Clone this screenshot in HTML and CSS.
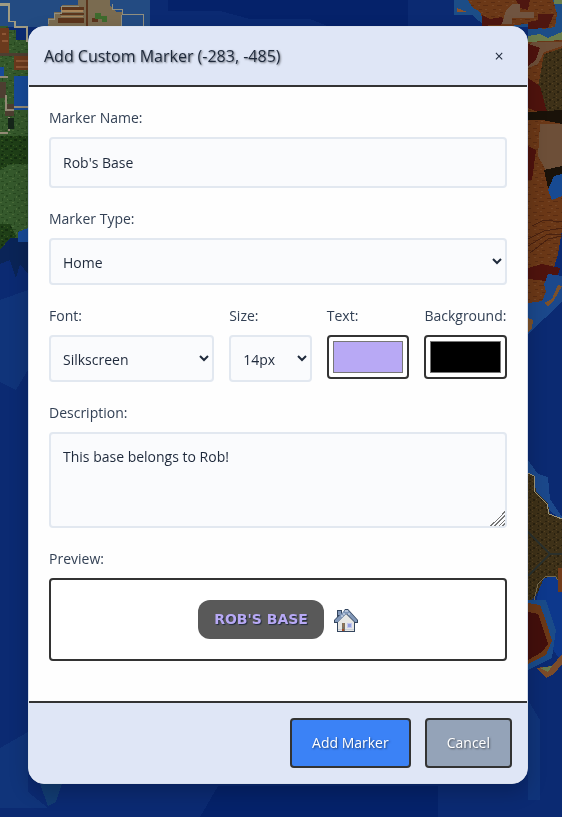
FILE: index.html
```html
<!DOCTYPE html>
<html lang="en">

<head>
  <meta charset="utf-8">
  <meta name="viewport" content="width=device-width, initial-scale=1">
  <title>Add Custom Marker</title>
  <link rel="stylesheet" href="styles.css">
</head>

<body>
  <!-- world map behind the dialog -->
  <svg class="map" viewBox="0 0 562 817" preserveAspectRatio="xMidYMid slice" shape-rendering="crispEdges" aria-hidden="true">
    <defs>
      <pattern id="grass" width="12" height="12" patternUnits="userSpaceOnUse">
        <path fill="#35592c" d="M0 0h12v12H0z"/>
        <path fill="#27481f" d="M1 1h3v1H1zM6 3h2v2H6zM2 6h1v3H2zM9 8h3v1H9zM5 10h2v1H5z"/>
        <path fill="#4a6b39" d="M4 4h1v2H4zM9 1h2v1H9zM7 7h1v1H7zM0 10h2v1H0z"/>
      </pattern>
      <pattern id="forest" width="9" height="9" patternUnits="userSpaceOnUse">
        <path fill="#1f3f17" d="M0 0h9v9H0z"/>
        <path fill="#142d10" d="M1 1h2v2H1zM5 4h3v2H5zM2 7h2v1H2z"/>
        <path fill="#36551f" d="M4 1h1v1H4zM7 2h1v1H7zM1 5h2v1H1z"/>
      </pattern>
      <pattern id="mesa" width="14" height="14" patternUnits="userSpaceOnUse">
        <path fill="#6b3817" d="M0 0h14v14H0z"/>
        <path fill="#5a2c12" d="M1 2h4v1H1zM7 5h5v1H7zM3 9h3v1H3zM10 12h3v1h-3z"/>
        <path fill="#754525" d="M8 1h2v1H8zM2 5h2v1H2zM9 9h2v1H9zM5 12h2v1H5z"/>
      </pattern>
      <pattern id="wood" width="8" height="8" patternUnits="userSpaceOnUse">
        <path fill="#3e3118" d="M0 0h8v8H0z"/>
        <path fill="#2a210f" d="M1 1h2v1H1zM5 3h2v2H5zM2 5h1v2H2z"/>
        <path fill="#554121" d="M4 1h1v1H4zM0 3h1v1H0zM4 6h1v1H4z"/>
      </pattern>
    </defs>

    <path fill="#0b2a72" d="M0 0h562v817H0z"/>
    <path fill="#05226a" d="M168 0h240v27H330l-20-8h-60l-30-8h-52zM218 786h220v31H200z"/>
    <path fill="#10347a" d="M0 300l28-10v80l-12 20-16-8zM0 748l28-16v60l20 16H0zM528 700l12 20v80h-12z"/>
    <path fill="#123c72" d="M40 784h22l-6 18-8 4z"/>

    <!-- river and town, north west -->
    <path fill="#234b82" d="M0 0h150v27H0z"/>
    <path fill="url(#grass)" d="M0 26h8v4h8v10h12v202l-12 4-6 6H0z"/>
    <path fill="#174a98" d="M14 76h14v34H14zM0 67h4v10H0z"/>
    <path fill="#a09b83" d="M0 6h8v16h6v6h12v14h2v-16H16v-5h-6V3H0z"/>
    <path fill="#6b3a1d" d="M0 28h9v25H0zM14 56h14v14H14z"/>
    <path fill="#8d5634" d="M2 33h4v2H2zM2 40h6v2H2zM16 60h12v2H16zM16 66h12v2H16z"/>
    <path fill="#4d3e31" d="M0 53h28v3H0zM0 82h6v16H0zM5 104h9v12H5z"/>
    <path fill="#938a76" d="M0 76h8v2H0zM5 95h2v14h7v2H5zM14 106h14v2H14zM8 117h2v14H8zM0 132h8v2H0z"/>
    <path fill="#16261a" d="M8 118h6v11H8z"/>
    <path fill="url(#forest)" d="M0 136h28v28H10l-10 6zM0 224h10l6 12-8 14H0z"/>
    <path fill="#0a2457" d="M10 238h18v36l-8-10-4 14-6-18-10 4v-14z"/>
    <path fill="#174a98" d="M18 232l10-4v14H18z"/>
    <path fill="#7a6b50" d="M48 27v-9h6v-6h8V5h16V0h32v6l6 6h6v15z"/>
    <path fill="#5c351c" d="M60 7h24v3H60zM60 13h24v2H60zM58 18h26v5H58zM86 0h2v26h-2zM92 18h6v4h-6z"/>
    <path fill="#a8855a" d="M61 10h22v2H61zM61 16h22v1H61z"/>
    <path fill="#3e6b2d" d="M95 13h6v3h6v6h-5v-3h-7z"/>
    <path fill="none" stroke="#918f7f" d="M48 24v-5h6v-6h7V6h18M112 4v5h10v5h21v13M121 15v12"/>

    <!-- mesa coast, north east -->
    <path fill="#1c4d87" d="M454 0h108v62h-34V27h-42l-14-12h-18z"/>
    <path fill="#8a522c" d="M457 8l10 4h-10z"/>
    <path fill="url(#mesa)" d="M468 0h85l4 14-2 13-12 2-12-6-20 3h-25l-6-14-8-5z"/>
    <path fill="#4e1610" d="M516 0h14l-2 10-8-2zM538 14h16l-6 14-20 1v-7l10-2zM482 15l8 4 12-2 5 7-25 2z"/>
    <path fill="#705440" d="M512 4h8v8h14v6h-22v6h-10l4-14z"/>
    <path fill="#6a7d4c" d="M528 36l12-2 8 4 14-6v8l-16 4-18-2zM554 0h8v4h-8z"/>
    <path fill="url(#mesa)" d="M528 42l34-2v190l-4 24-6 20-12 22-12 6z"/>
    <path fill="#6d4f38" d="M532 42h30v4l-18 6-6 12-10 4v-22zM540 124h22v48l-12 6-12-22z"/>
    <path fill="url(#wood)" d="M544 54l18-6v62l-12 8-14-20z"/>
    <path fill="#4f130d" d="M528 44l12 4-4 12-8 6zM528 78l12 8 8 30-20-8zM528 146l8 4-4 30h-4zM528 268l14-4 18 4-4 14-28-3z"/>
    <path fill="#1a1209" d="M528 112l34-2v14l-20-4h-14zM544 170l18-4v12l-14 10z"/>
    <path fill="#174a92" d="M562 174l-8 2-6 14 4 10 10-4z"/>
    <path fill="none" stroke="#4a2210" d="M528 239l16-8 18-3M528 246l20-12h14M530 253l18-14 14-3M532 226l12-6 18 2"/>
    <path fill="#1b488b" d="M562 276v26l-34 32v-34l14-10 6-16z"/>
    <path fill="url(#mesa)" d="M528 284h16l2 8-4 9-14 2z"/>
    <path fill="#7b512b" d="M562 286l-8 14-6 6-4-3 8-4 6-14zM528 318l5 2-1 8-4 4z"/>

    <!-- dark oak coast, south east -->
    <path fill="#1b488b" d="M528 460l10 14 10 3 2 22 12 18v4l-34-30z"/>
    <path fill="url(#wood)" d="M528 473l6 3 2 16 12 12 2 10 12 5v70l-18-6-8 12-8 8z"/>
    <path fill="none" stroke="#9d967c" d="M528 473l6 3 1 16 12 12 2 10 13 5"/>
    <path fill="none" stroke="#2b302b" stroke-width="2" d="M528 532l22 22h12M550 554l-22 22"/>
    <path fill="#0d388c" d="M562 586l-6-10-12 2-6 14-4 32 28 38z"/>
    <path fill="none" stroke="#74694d" d="M534 600l4-16 8-8 10 1 6 10"/>
    <path fill="#713b19" d="M558 568h4v24h-4z"/>
    <path fill="#1a4b89" d="M546 600l10 30-4 28-24 12v-70z"/>
    <path fill="#6b3817" d="M528 603l12 2 6 16 6 20-6 14-18 9z"/>
    <path fill="#430f0c" d="M528 612l10 2 5 14 5 16-6 8-14 8z"/>
    <path fill="#7a4b2a" d="M536 668l16-2 10-12v10l-8 10-8 4z"/>
    <path fill="#68784b" d="M540 668l12-2-4 6z"/>
  </svg>

  <form class="modal" role="dialog" aria-labelledby="modal_title">
    <div class="modal-header">
      <h3 class="modal-title" id="modal_title">Add Custom Marker (-283, -485)</h3>
      <button type="button" class="close-btn" aria-label="Close">×</button>
    </div>

    <div class="modal-body">
      <div class="form-group">
        <label for="marker_name">Marker Name:</label>
        <input class="form-control" id="marker_name" type="text" value="Rob's Base">
      </div>
      <div class="form-group">
        <label for="marker_type">Marker Type:</label>
        <select class="form-control" id="marker_type">
          <option>Home</option>
        </select>
      </div>
      <div class="form-row">
        <div class="form-group">
          <label for="marker_font">Font:</label>
          <select class="form-control" id="marker_font">
            <option>Silkscreen</option>
          </select>
        </div>
        <div class="form-group">
          <label for="marker_size">Size:</label>
          <select class="form-control" id="marker_size">
            <option>14px</option>
          </select>
        </div>
        <div class="form-group">
          <label for="text_color">Text:</label>
          <input class="color-control" id="text_color" type="color" value="#b8a9f5">
        </div>
        <div class="form-group">
          <label for="bg_color">Background:</label>
          <input class="color-control" id="bg_color" type="color" value="#000000">
        </div>
      </div>
      <div class="form-group">
        <label for="description">Description:</label>
        <textarea class="form-control" id="description">This base belongs to Rob!</textarea>
      </div>
      <div class="form-group">
        <div class="group-title">Preview:</div>
        <div class="preview">
          <span class="marker-label">ROB'S BASE</span>
          <svg class="marker-icon" viewBox="0 0 24 24" role="img" aria-label="Home">
            <path fill="#34465f" d="M3 2h5v4l3-5h3l10 11v3h-3v9H3v-9H0v-3l3-3z"/>
            <path fill="#e7e7e5" d="M12 6l8 8v9H4v-9z"/>
            <path fill="#8197b8" d="M4 3h3v4H4zM11 2h3l9 10v2h-2l-8-8h-1l-8 8H1v-2z"/>
            <path fill="#b2c1d8" d="M11 2h3v2h-3zM9 5h2v2H9zM7 7h2v2H7zM14 5h2v2h-2z"/>
            <path fill="#c9cfd7" d="M4 21h16v1H4z"/>
            <path fill="#797164" d="M8 15h3v8H8z"/>
            <path fill="#9b7654" d="M9 15h1v4H9z"/>
            <path fill="#a54a27" d="M8 21h2v2H8z"/>
            <path fill="#c2c8ef" d="M13 15h5v5h-5z"/>
            <path fill="#939ee0" d="M14 16h3v3h-3z"/>
          </svg>
        </div>
      </div>
    </div>

    <div class="modal-footer">
      <button type="submit" class="btn btn-primary">Add Marker</button>
      <button type="button" class="btn btn-secondary">Cancel</button>
    </div>
  </form>
</body>

</html>
```

FILE: styles.css
```css
* {
    box-sizing: border-box;
}
body {
    display: flex;
    justify-content: center;
    align-items: flex-start;
    min-height: 100vh;
    margin: 0;
    padding: 26px 34px 32px 28px;
    background-color: #0b2a72;
    font-family: "Open Sans", "Noto Sans", sans-serif;
    font-size: 14px;
    line-height: 22px;
    color: #1e293b;
}
.map {
    position: fixed;
    inset: 0;
    z-index: -1;
    width: 100%;
    height: 100%;
}

/* dialog */
.modal {
    width: 100%;
    max-width: 500px;
    overflow: hidden;
    background-color: #fefefe;
    border: 1px solid #d9e0ec;
    border-radius: 16px;
    box-shadow: 0 8px 20px rgba(0, 0, 0, .2);
}
.modal-header {
    display: flex;
    align-items: center;
    justify-content: space-between;
    padding: 18px 15px;
    background-color: #dfe6f6;
    border-bottom: 2px solid #333;
}
.modal-title {
    margin: 0;
    font-size: 16px;
    font-weight: 500;
    text-shadow: 1px 1px 2px rgba(0, 0, 0, .5);
}
.close-btn {
    width: 26px;
    padding: 0;
    background: none;
    border: none;
    color: #1e293b;
    font: inherit;
    font-size: 16px;
    cursor: pointer;
}
.modal-body {
    padding: 20px 20px 40px;
}

/* form */
.form-group {
    min-width: 0;
}
.form-group + .form-group,
.form-group + .form-row,
.form-row + .form-group {
    margin-top: 20px;
}
.form-row {
    display: grid;
    grid-template-columns: 2fr 1fr 1fr 1fr;
    gap: 15px;
}
.form-row .form-group {
    margin-top: 0;
}
.form-group label,
.group-title {
    display: block;
    margin-bottom: 8px;
    color: #334155;
}
.form-control {
    display: block;
    width: 100%;
    padding: 12px;
    background-color: #fafbfd;
    border: 2px solid #e2e8f0;
    border-radius: 4px;
    outline: none;
    color: #1e293b;
    font: inherit;
}
input.form-control {
    height: 51px;
}
select.form-control {
    height: 47px;
    padding: 12px 8px;
}
textarea.form-control {
    height: 96px;
    resize: vertical;
}
textarea.form-control::-webkit-resizer {
    background: linear-gradient(135deg, transparent 50%, #777 50%, #777 54%, transparent 54%, transparent 63%, #777 63%, #777 68%, transparent 68%, transparent 77%, #777 77%, #777 82%, transparent 82%, transparent 90%, #777 90%, #777 95%, transparent 95%);
}
.color-control {
    display: block;
    width: 100%;
    height: 44px;
    padding: 4px;
    background-color: #fff;
    border: 2px solid #333;
    border-radius: 4px;
    cursor: pointer;
}
.color-control::-webkit-color-swatch-wrapper {
    padding: 0;
}
.color-control::-webkit-color-swatch {
    border: 1px solid #777;
}

/* preview */
.preview {
    display: flex;
    align-items: center;
    justify-content: center;
    gap: 10px;
    padding: 20px;
    background-color: #fff;
    border: 2px solid #333;
    border-radius: 4px;
}
.marker-label {
    padding: 8px 16px;
    background-color: #595959;
    border-radius: 12px;
    color: #b8a9f5;
    font-family: "DejaVu Sans", sans-serif;
    font-size: 14px;
    font-weight: bold;
    line-height: 23px;
    text-shadow: 1px 1px 1px #222b3d;
}
.marker-icon {
    width: 24px;
    height: 24px;
}

/* footer */
.modal-footer {
    display: flex;
    justify-content: flex-end;
    gap: 14px;
    padding: 15px;
    background-color: #dfe6f6;
    border-top: 2px solid #333;
}
.btn {
    padding: 12px 20px;
    border: 2px solid #333;
    border-radius: 4px;
    color: #fff;
    font: inherit;
    text-shadow: 1px 1px 2px rgba(0, 0, 0, .5);
    cursor: pointer;
}
.btn-primary {
    background-color: #3b82f6;
}
.btn-secondary {
    background-color: #94a3b8;
}
```
